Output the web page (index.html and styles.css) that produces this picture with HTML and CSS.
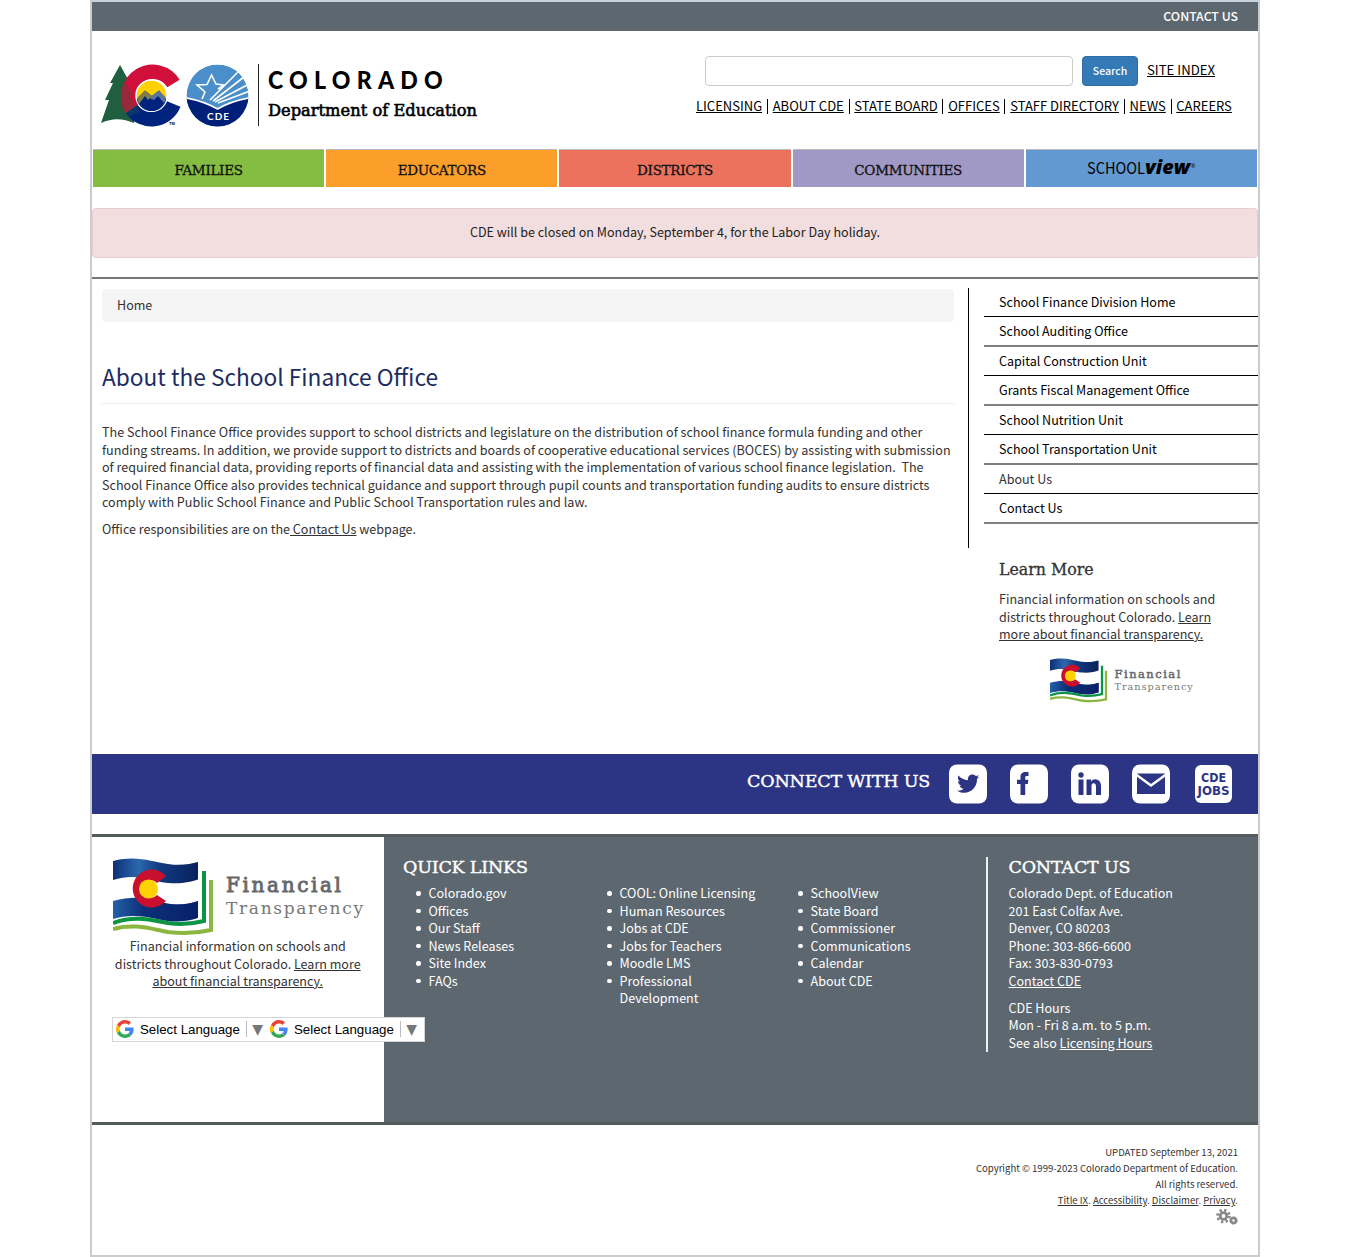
FILE: index.html
```html
<!DOCTYPE html>
<html lang="en">
<head>
<meta charset="utf-8">
<title>About the School Finance Office | CDE</title>
<link rel="stylesheet" href="styles.css">
</head>
<body>
<svg class="defs" width="0" height="0" aria-hidden="true">
  <defs>
    <linearGradient id="wave" x1="0" x2="1" y1="0" y2="0">
      <stop offset="0" stop-color="#0d2f75"/><stop offset=".3" stop-color="#2b68ad"/><stop offset=".55" stop-color="#123a80"/><stop offset="1" stop-color="#08215c"/>
    </linearGradient>
    <linearGradient id="wave2" x1="0" x2="1" y1="0" y2="0">
      <stop offset="0" stop-color="#2360a8"/><stop offset=".35" stop-color="#0c3078"/><stop offset="1" stop-color="#08206a"/>
    </linearGradient>
    <clipPath id="seal"><circle cx="117.500" cy="32.500" r="31"/></clipPath>
    <symbol id="transparency" viewBox="0 0 252 78">
      <path fill="url(#wave)" d="M0 3C25-3 38 4 55 6 68 8 77 6 85 4V59C73 63 61 64 44 60 27 56 13 56 0 60Z"/>
      <path fill="#fff" d="M0 22C24 14 39 24 55 25 69 26 78 24 86 21V43C73 47 61 48 44 44 27 40 12 41 0 44Z"/>
      <path fill="url(#wave2)" d="M0 43C25 36 39 42 52 45 68 48 77 46 85 43V60C73 64 61 65 44 61 27 57 13 57 0 61Z"/>
      <path fill="#c8102e" d="M53 18A19 19 0 1 0 53 43L44 37A9 9 0 1 1 44 25Z"/>
      <circle cx="35.500" cy="31" r="9.500" fill="#ffd100"/>
      <path fill="none" stroke="#0b9444" stroke-width="4" d="M0 65C22 57 38 62 55 65 69 67 79 66 91 63V13"/>
      <path fill="none" stroke="#8bb63f" stroke-width="4" d="M0 71C22 65 38 71 55 74 70 76 85 75 98 72V22"/>
      <text x="113" y="34" textLength="115" class="ft-strong">Financial</text>
      <text x="113" y="56" textLength="137" class="ft-light">Transparency</text>
    </symbol>
    <symbol id="google" viewBox="0 0 48 48">
      <path fill="#ea4335" d="M24 9.500c3.500 0 6.700 1.200 9.200 3.600l6.900-6.900C35.900 2.400 30.500 0 24 0 14.600 0 6.500 5.400 2.600 13.200l8 6.200C12.400 13.700 17.700 9.500 24 9.500z"/>
      <path fill="#4285f4" d="M47 24.500c0-1.600-.2-3.100-.4-4.500H24v9h12.900c-.6 3-2.200 5.500-4.700 7.200l7.700 6C44.400 38 47 31.800 47 24.500z"/>
      <path fill="#fbbc05" d="M10.500 28.600A14.500 14.500 0 0 1 10.500 19.400l-8-6.200a24 24 0 0 0 0 21.600z"/>
      <path fill="#34a853" d="M24 48c6.500 0 11.900-2.100 15.900-5.800l-7.700-6c-2.200 1.500-4.900 2.300-8.200 2.300-6.300 0-11.600-4.200-13.500-9.900l-8 6.200C6.500 42.600 14.600 48 24 48z"/>
    </symbol>
  </defs>
</svg>

<div class="page">
  <div class="topbar"><a href="#">CONTACT US</a></div>

  <header class="header">
    <svg class="logo" width="400" height="66" viewBox="0 0 400 66" role="img" aria-label="Colorado Department of Education">
      <path fill="#1f5f3f" d="M20 2 10 20H13L5 37H9L1 60C14 54 24 56 34 60L40 30 30 20Z"/>
      <path fill="none" stroke="#d0103a" stroke-width="14.500" d="M73.500 20.500A24 24 0 1 0 31.800 46.100"/>
      <path fill="none" stroke="#00247d" stroke-width="14.500" d="M31.800 46.100A24 24 0 0 0 73.750 41"/>
      <path fill="#1f5f3f" opacity=".3" d="M20 2 28 17 25 19 33 32 31 35 40 49 28 54Q16 34 22 20Z"/>
      <circle cx="51.500" cy="32.500" r="15.500" fill="#ffd100" stroke="#fff" stroke-width="1.500"/>
      <path fill="#00247d" d="M36.800 36 45 27.500 52 33 59 27.500 66.200 36A15 15 0 0 1 36.800 36Z"/>
      <path fill="#807d46" d="M37 35 45 27.500 52 33 48 37 45 33 39 41Z"/>
      <path fill="#5d7697" d="M49 35 59 27.500 66 35 64 40 58 33 54 37Z"/>
      <text class="tm" x="69" y="62">TM</text>
      <g clip-path="url(#seal)">
        <circle cx="117.500" cy="32.500" r="31" fill="#4b8fca"/>
        <path fill="#001f78" stroke="#fff" stroke-width="1.500" d="M84 34.500Q104 38 117.500 46 131 38 151 34.500V70H84Z"/>
        <path fill="none" stroke="#fff" stroke-width="1.600" d="M102 36 105 29 97 22 107 21.500 111.500 12 116 21 124 22 118 26M110 37 139 8M113 38 144 14M115 39 149 21M118 40 150 28"/>
      </g>
      <text class="cde" x="107" y="57" textLength="22">CDE</text>
      <path stroke="#222" d="M158.500 1V63"/>
      <text class="logo-state" x="168" y="26" textLength="181" lengthAdjust="spacingAndGlyphs">COLORADO</text>
      <text class="logo-dept" x="168" y="53" textLength="209" lengthAdjust="spacingAndGlyphs">Department of Education</text>
    </svg>
    <div class="tools">
      <form class="search">
        <input type="text" aria-label="Search">
        <button type="button">Search</button>
        <a href="#">SITE INDEX</a>
      </form>
      <nav class="quick">
        <a href="#">LICENSING</a><i></i><a href="#">ABOUT CDE</a><i></i><a href="#">STATE BOARD</a><i></i><a href="#">OFFICES</a><i></i><a href="#">STAFF DIRECTORY</a><i></i><a href="#">NEWS</a><i></i><a href="#">CAREERS</a>
      </nav>
    </div>
  </header>

  <nav class="tabs">
    <a class="green" href="#">FAMILIES</a>
    <a class="orange" href="#">EDUCATORS</a>
    <a class="coral" href="#">DISTRICTS</a>
    <a class="purple" href="#">COMMUNITIES</a>
    <a class="blue" href="#"><svg width="110" height="32" viewBox="0 0 110 32"><text class="sv-thin" x="1" y="23" textLength="58" lengthAdjust="spacingAndGlyphs">SCHOOL</text><text class="sv-bold" x="59" y="23" textLength="45" lengthAdjust="spacingAndGlyphs">view</text><text class="sv-reg" x="104.500" y="17">®</text></svg></a>
  </nav>

  <div class="alert">CDE will be closed on Monday, September 4, for the Labor Day holiday.</div>

  <div class="columns">
    <main class="main">
      <div class="crumb">Home</div>
      <h1>About the School Finance Office</h1>
      <p>The School Finance Office provides support to school districts and legislature on the distribution of school finance formula funding and other<br>funding streams. In addition, we provide support to districts and boards of cooperative educational services (BOCES) by assisting with submission<br>of required financial data, providing reports of financial data and assisting with the implementation of various school finance legislation.&nbsp; The<br>School Finance Office also provides technical guidance and support through pupil counts and transportation funding audits to ensure districts<br>comply with Public School Finance and Public School Transportation rules and law.</p>
      <p>Office responsibilities are on the<a href="#"> Contact Us</a> webpage.</p>
    </main>
    <aside class="side">
      <div class="sidenav">
        <ul>
          <li>School Finance Division Home</li>
          <li>School Auditing Office</li>
          <li>Capital Construction Unit</li>
          <li>Grants Fiscal Management Office</li>
          <li>School Nutrition Unit</li>
          <li>School Transportation Unit</li>
          <li class="current">About Us</li>
          <li>Contact Us</li>
        </ul>
      </div>
      <div class="learn">
        <h2>Learn More</h2>
        <p>Financial information on schools and<br>districts throughout Colorado. <a href="#">Learn<br>more about financial transparency.</a></p>
        <svg width="144" height="45"><use href="#transparency"/></svg>
      </div>
    </aside>
  </div>

  <div class="connect">
    <h2>CONNECT WITH US</h2>
    <svg class="icon" width="38" height="40" viewBox="0 0 38 40"><rect width="38" height="39" y=".5" rx="8" fill="#fff"/><path fill="#2c3583" transform="translate(8 8.500) scale(.0435)" d="M459.400 151.700c.3 4.500.3 9.100.3 13.600 0 138.700-105.600 298.600-298.600 298.600-59.500 0-114.700-17.200-161.100-47.100 8.400 1 16.600 1.300 25.300 1.300 49.100 0 94.200-16.600 130.300-44.800-46.100-1-84.800-31.200-98.100-72.800 6.500 1 13 1.600 19.800 1.600 9.400 0 18.800-1.300 27.600-3.600-48.100-9.700-84.100-52-84.100-103v-1.300c14 7.800 30.200 12.700 47.400 13.300-28.300-18.800-46.800-51-46.800-87.400 0-19.500 5.200-37.400 14.300-53 51.700 63.700 129.300 105.300 216.400 109.800-1.600-7.800-2.600-15.900-2.600-24 0-57.800 46.800-104.900 104.900-104.900 30.200 0 57.500 12.700 76.700 33.100 23.700-4.500 46.500-13.300 66.600-25.300-7.800 24.400-24.400 44.800-46.100 57.800 21.100-2.300 41.600-8.100 60.400-16.200-14.300 20.800-32.200 39.300-52.600 54.300z"/></svg>
    <svg class="icon" width="38" height="40" viewBox="0 0 38 40"><rect width="38" height="39" y=".5" rx="8" fill="#fff"/><path fill="#2c3583" d="M10.500 31V20H7V15.800H10.500V13C10.500 9.500 12.500 8 15.500 8H18.500V12H16.800C15.700 12 15.200 12.500 15.200 13.500V15.800H18.300L17.900 20H15.200V31Z"/></svg>
    <svg class="icon" width="38" height="40" viewBox="0 0 38 40"><rect width="38" height="39" y=".5" rx="8" fill="#fff"/><g fill="#2c3583"><circle cx="10" cy="11" r="2.700"/><path d="M7.500 15.500H12.500V31H7.500ZM15.500 15.500H20V17.500C21.500 15 24.500 14.800 26.500 15.700 29 17 30 19 30 22V31H25V23C25 20.500 24.300 19.300 22.800 19.300 21 19.300 20.500 20.500 20.500 22.500V31H15.500Z"/></g></svg>
    <svg class="icon" width="38" height="40" viewBox="0 0 38 40"><rect width="38" height="39" y=".5" rx="8" fill="#fff"/><path fill="#2c3583" d="M5 9.500H33V30H5Z"/><path fill="none" stroke="#fff" stroke-width="2.500" d="M4 10.500 19 21.500 34 10.500"/></svg>
    <svg class="icon jobs" width="37" height="38" viewBox="0 0 37 38"><rect width="37" height="38" rx="6" fill="#fff"/><text x="6" y="17" textLength="25" lengthAdjust="spacingAndGlyphs">CDE</text><text x="2.500" y="30" textLength="32" lengthAdjust="spacingAndGlyphs">JOBS</text></svg>
  </div>

  <footer class="footer">
    <section class="finance">
      <svg width="252" height="78"><use href="#transparency"/></svg>
      <p>Financial information on schools and<br>districts throughout Colorado. <a href="#">Learn more<br>about financial transparency.</a></p>
      <div class="translate">
        <svg width="18" height="18"><use href="#google"/></svg><span>Select Language</span><b>▼</b>
        <svg width="18" height="18"><use href="#google"/></svg><span>Select Language</span><b>▼</b>
      </div>
    </section>
    <section class="links">
      <h2>QUICK LINKS</h2>
      <div class="lists">
        <ul><li>Colorado.gov</li><li>Offices</li><li>Our Staff</li><li>News Releases</li><li>Site Index</li><li>FAQs</li></ul>
        <ul><li>COOL: Online Licensing</li><li>Human Resources</li><li>Jobs at CDE</li><li>Jobs for Teachers</li><li>Moodle LMS</li><li>Professional<br>Development</li></ul>
        <ul><li>SchoolView</li><li>State Board</li><li>Commissioner</li><li>Communications</li><li>Calendar</li><li>About CDE</li></ul>
      </div>
    </section>
    <section class="contact">
      <h2>CONTACT US</h2>
      <p>Colorado Dept. of Education<br>201 East Colfax Ave.<br>Denver, CO 80203<br>Phone: 303-866-6600<br>Fax: 303-830-0793<br><a href="#">Contact CDE</a></p>
      <p>CDE Hours<br>Mon - Fri 8 a.m. to 5 p.m.<br>See also <a href="#">Licensing Hours</a></p>
    </section>
  </footer>

  <div class="legal">
    UPDATED September 13, 2021<br>Copyright © 1999-2023 Colorado Department of Education.<br>All rights reserved.<br>
    <a href="#">Title IX</a>. <a href="#">Accessibility</a>. <a href="#">Disclaimer</a>. <a href="#">Privacy</a>.
    <svg width="22" height="16" viewBox="0 0 22 16"><g fill="none" stroke="#888"><circle cx="7.500" cy="7" r="3.300" stroke-width="2.800"/><circle cx="7.500" cy="7" r="5.800" stroke-width="3" stroke-dasharray="2.200 2.355"/><circle cx="17.500" cy="11.500" r="2.500" stroke-width="2.600"/><circle cx="17.500" cy="11.500" r="3.700" stroke-width="1" stroke-dasharray="1.500 1.400"/></g></svg>
  </div>
</div>
</body>
</html>
```
FILE: styles.css
```css
* { box-sizing: border-box; }
body { margin: 0; background: #fff; color: #333; font: 12.55px/17.5px "Noto Sans CJK SC", sans-serif; }
h1, h2, p, ul { margin: 0; padding: 0; font-weight: 400; }
a { color: inherit; }
ul { list-style: none; }
svg { display: block; flex: none; }
.defs { position: absolute; }
.page { width: 1170px; height: 1257px; margin: 0 auto; border: 2px solid #ccc; border-top-color: #c5d3df; }

.topbar { height: 29px; padding-right: 20px; background: #5c6770; color: #fff; font-size: 12.3px; line-height: 28px; text-align: right; font-weight: 500; }
.topbar a { text-decoration: none; }

.header { display: flex; justify-content: space-between; height: 118px; padding: 25px 26px 0 8px; color: #000; }
.logo { margin-top: 7px; }
.tools { width: 536px; }
.search { display: flex; align-items: center; padding-left: 9px; height: 30px; margin: 0; font-size: 13.2px; }
.search input { width: 368px; height: 30px; border: 1px solid #ccc; border-radius: 4px; }
.search button { width: 56px; height: 30px; margin: 0 9px; padding: 0 0 2px; border: 1px solid #2e6da4; border-radius: 4px; background: #337ab7; color: #fff; font: 500 10.5px "Noto Sans CJK SC", sans-serif; }
.search a { margin-top: -2px; }
.quick { display: flex; justify-content: space-between; align-items: center; margin-top: 10px; height: 20px; font-size: 13px; white-space: nowrap; }
.quick i { width: 1px; height: 15px; background: #000; }

.tabs { display: grid; grid-template-columns: repeat(5, 1fr); gap: 2px; height: 38px; padding: 0 1px; }
.tabs a { display: flex; justify-content: center; align-items: center; padding-top: 2px; color: #111; text-decoration: none; font: 13.5px "DejaVu Serif", serif; letter-spacing: -.3px; -webkit-text-stroke: .3px; border-top: 1px solid #bbb; }
.tabs .green { background: #84bd41; }
.tabs .orange { background: #fc9e2a; }
.tabs .coral { background: #ec725d; }
.tabs .purple { background: #a199c5; }
.tabs .blue { background: #6399d2; padding: 0 0 3px; letter-spacing: 0; -webkit-text-stroke: 0; }
.sv-thin { font: 16.5px "Noto Sans CJK SC", sans-serif; }
.sv-bold { font: italic 800 20px "Open Sans", sans-serif; }
.sv-reg { font: 6px "Open Sans", sans-serif; }

.alert { height: 50px; margin-top: 21px; border: 1px solid #ebccd1; border-radius: 4px; background: #f2dede; color: #222; line-height: 46px; text-align: center; }

.columns { display: flex; height: 477px; margin-top: 19px; padding: 10px 0 0 10px; border-top: 2px solid #777; }
.main { width: 852px; margin-right: 14px; }
.crumb { height: 33px; padding-left: 15px; border-radius: 4px; background: #f5f5f5; line-height: 32px; }
.main h1 { height: 82px; margin-bottom: 19px; padding-top: 40px; border-bottom: 1px solid #eee; color: #1c2c62; font-size: 22.7px; line-height: 30px; }
.main p { margin-bottom: 9.500px; font-size: 12.580px; white-space: nowrap; }
.side { width: 290px; }
.sidenav { height: 260px; padding-left: 15px; border-left: 1px solid #000; color: #000; }
.sidenav ul { margin-top: -1px; }
.sidenav li { height: 29px; padding: 5px 0 0 15px; border-bottom: 1px solid #000; }
.sidenav li:nth-child(even) { height: 30px; border-bottom: 2px solid #7f7f7f; }
.sidenav .current { color: #333; }
.learn { padding: 10px 0 0 31px; white-space: nowrap; }
.learn h2 { margin-bottom: 8px; font: 15.8px/24px "DejaVu Serif", serif; -webkit-text-stroke: .3px; }
.learn svg { margin: 15px 0 0 51px; }

.ft-strong { fill: #66686c; stroke: #66686c; stroke-width: .9px; font: 20px "DejaVu Serif", serif; }
.ft-light { fill: #777; font: 300 17px "DejaVu Serif", serif; }
.tm { font: bold 4px "Liberation Sans", sans-serif; }
.cde { fill: #fff; font: bold 10px Lato, sans-serif; }
.logo-state { font: 900 24px Lato, sans-serif; letter-spacing: 6.5px; }
.logo-dept { font: 16.5px "DejaVu Serif", serif; stroke: #000; stroke-width: .6px; }

.connect { display: flex; height: 60px; padding: 10px 26px 0 0; justify-content: flex-end; background: #2c3583; color: #fff; }
.connect h2 { margin-right: 19px; font: 17.5px/34px "DejaVu Serif", serif; letter-spacing: -.2px; -webkit-text-stroke: .4px; }
.icon { margin-left: 23px; }
.connect h2 + .icon { margin-left: 0; }
.jobs { margin: 1px 0 0 25px; fill: #2c3583; font: bold 12.5px "DejaVu Sans", sans-serif; }

.footer { display: grid; grid-template-columns: 291.5px 602px 272.5px; height: 291px; margin-top: 20px; border: solid #555b5b; border-width: 3px 0; background: #5c6770; color: #fff; font-weight: 500; }
.footer h2 { font: 17.500px/24px "DejaVu Serif", serif; letter-spacing: -.2px; -webkit-text-stroke: .4px; }
.finance { background: #fff; color: #333; padding: 21px 20px 0; text-align: center; font-weight: 400; white-space: nowrap; }
.finance > svg { margin-left: 1px; }
.finance p { margin-top: 1px; }
.translate { display: flex; align-items: center; width: 313px; height: 25px; margin-top: 27px; padding-left: 3px; border: 1px solid #d5d5d5; background: #fff; color: #000; font: 13.3px "Liberation Sans", sans-serif; }
.translate span { margin-left: 6px; width: 100px; }
.translate b { width: 19px; margin: 0 7px 0 6px; border-left: 1px solid #bbb; color: #777; font: 14px/16px "DejaVu Sans", sans-serif; text-align: right; }
.links { padding: 18px 0 0 19.5px; }
.lists { display: grid; grid-template-columns: repeat(3, 191px); margin-top: 5px; }
.lists li { position: relative; padding-left: 25.5px; }
.lists li::before { content: ""; position: absolute; left: 13px; top: 7px; width: 4.5px; height: 4.5px; border-radius: 50%; background: #fff; }
.contact { height: 195px; margin-top: 20px; padding-left: 21px; border-left: 2px solid #e8f0f4; }
.contact h2 { margin: -2px 0 5px; }
.contact p { margin-bottom: 9.500px; }

.legal { padding: 19px 20px 0 0; text-align: right; font-size: 9.57px; line-height: 16px; }
.legal svg { margin: 1px 0 0 auto; }
```
